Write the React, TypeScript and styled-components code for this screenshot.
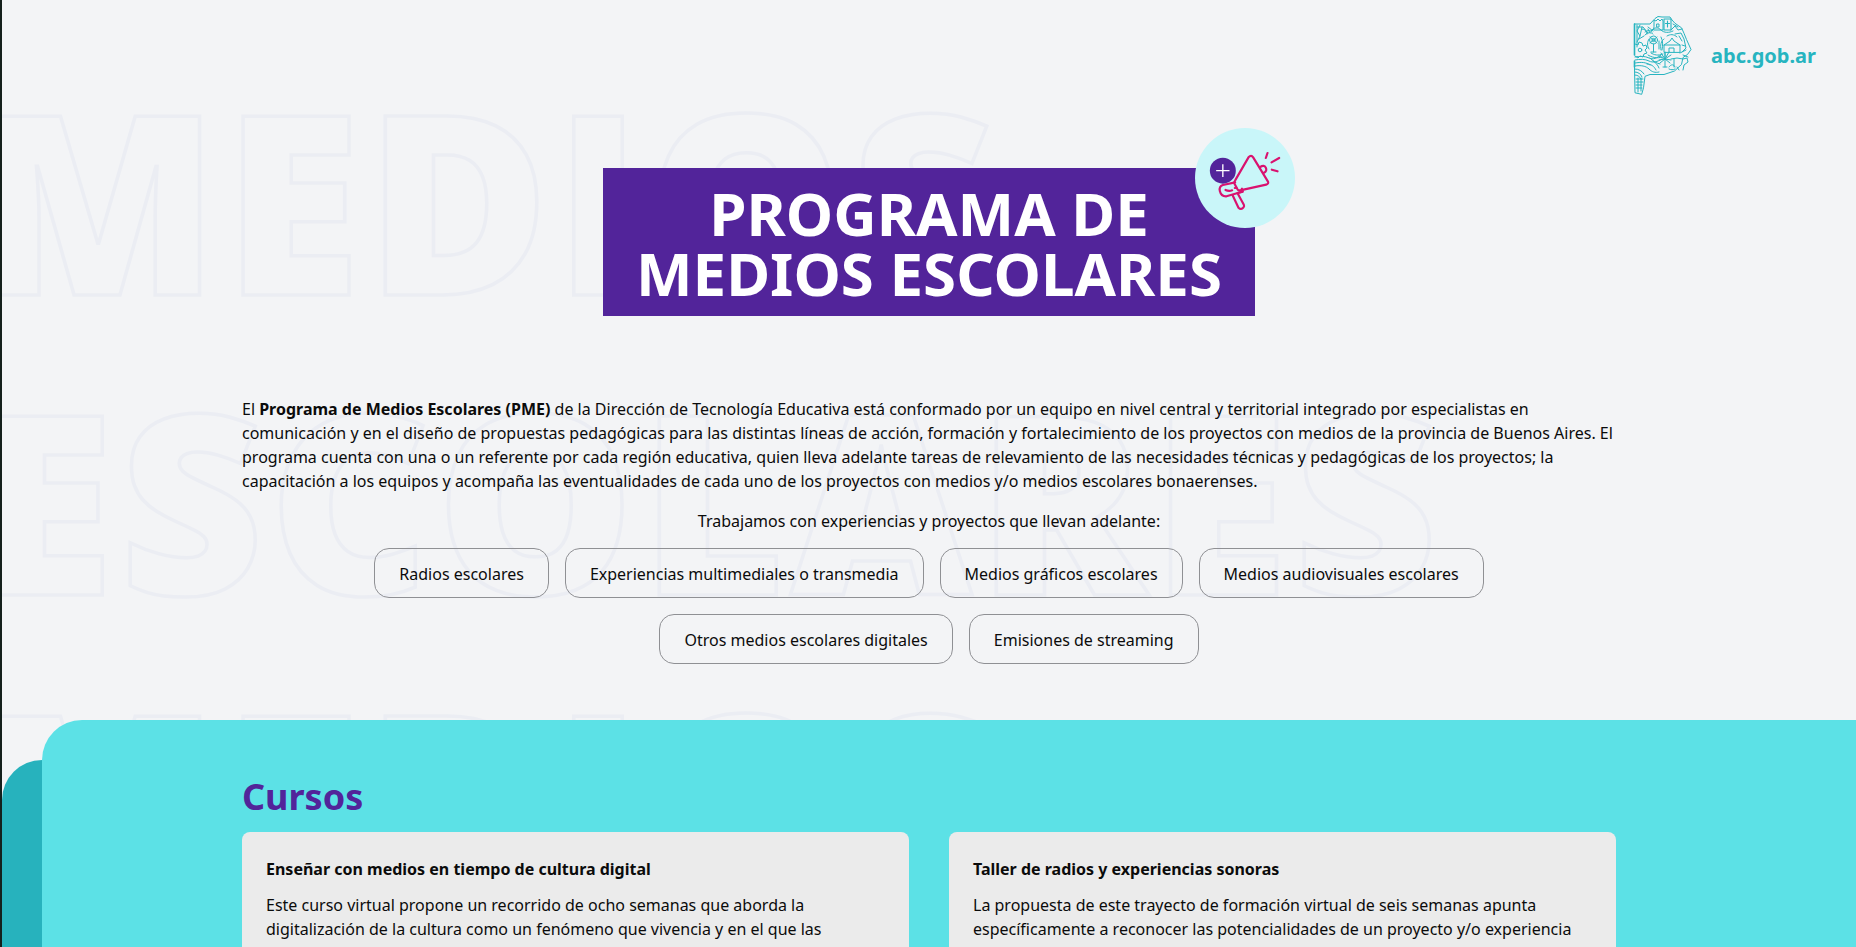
import React from "react";
import styled, { createGlobalStyle } from "styled-components";

const Global = createGlobalStyle`
  html, body { margin: 0; padding: 0; height: 100%; overflow: hidden; }
  body { background: #f3f4f6; font-family: "Noto Sans", "Open Sans", sans-serif; color: #0b0b0b; }
  * { box-sizing: border-box; }
`;

const Page = styled.div`
  position: relative;
  height: 947px;
  overflow: hidden;
  isolation: isolate;
`;

const EdgeLine = styled.div`
  position: absolute;
  left: 0;
  top: 0;
  bottom: 0;
  width: 2px;
  background: #14201c;
  z-index: 5;
`;

const Watermark = styled.div`
  position: absolute;
  left: -23px;
  top: 48px;
  z-index: -1;
  font-family: "Open Sans", sans-serif;
  font-size: 250px;
  line-height: 300px;
  font-weight: 800;
  letter-spacing: 5px;
  white-space: nowrap;
  color: transparent;
  -webkit-text-stroke: 3.5px #ebedf3;
  pointer-events: none;
`;

const Header = styled.header`
  display: flex;
  justify-content: flex-end;
  align-items: center;
  gap: 18px;
  height: 96px;
  padding: 15px 40px 0 0;
`;

const LogoText = styled.span`
  font-size: 20px;
  font-weight: 700;
  color: #27b4c0;
  margin-top: -1px;
`;

const TitleRow = styled.div`
  display: flex;
  justify-content: center;
  margin-top: 72px;
  padding-left: 2px;
`;

const TitleBox = styled.h1`
  position: relative;
  width: 652px;
  height: 148px;
  margin: 0;
  padding: 15px 0;
  background: #52249a;
  color: #fff;
  font-size: 60px;
  line-height: 60px;
  font-weight: 700;
  text-align: center;
`;

const Badge = styled.span`
  position: absolute;
  right: -40px;
  top: -40px;
  width: 100px;
  height: 100px;
  border-radius: 50%;
  background: #c9f6f9;
  display: flex;
`;

const Intro = styled.section`
  width: 1374px;
  margin: 81px 0 0 242px;
  font-size: 16px;
  line-height: 24px;
`;

const Paragraph = styled.p`
  margin: 0;
`;

const Lead = styled.p`
  margin: 16px 0 0;
  text-align: center;
`;

const Chips = styled.div`
  display: flex;
  flex-wrap: wrap;
  justify-content: center;
  gap: 16px;
  margin-top: 15px;
`;

const Chip = styled.div`
  height: 50px;
  padding: 2px 24px 0;
  display: flex;
  align-items: center;
  border: 1px solid #8f9094;
  border-radius: 15px;
  font-size: 16px;
`;

const Courses = styled.section`
  position: absolute;
  left: 42px;
  right: 0;
  top: 720px;
  bottom: 0;
  padding: 50px 240px 0 200px;
  background: #5ce1e6;
  border-top-left-radius: 40px;

  &::before {
    content: "";
    position: absolute;
    left: -40px;
    top: 40px;
    bottom: 0;
    width: 80px;
    background: #27b2bd;
    border-top-left-radius: 40px;
    z-index: -1;
  }
`;

const CoursesTitle = styled.h2`
  margin: 0;
  height: 62px;
  font-size: 36px;
  line-height: 54px;
  font-weight: 700;
  color: #52249a;
`;

const Cards = styled.div`
  display: grid;
  grid-template-columns: 1fr 1fr;
  gap: 40px;
`;

const Card = styled.article`
  height: 300px;
  padding: 25px 24px;
  background: #ebebeb;
  border-radius: 8px;
`;

const CardTitle = styled.h3`
  margin: 0 0 12px;
  font-size: 16px;
  line-height: 24px;
  font-weight: 700;
`;

const CardText = styled.p`
  margin: 0;
  font-size: 16px;
  line-height: 24px;
`;

const ProvinceLogo = () => (
  <svg width="60" height="82" viewBox="0 0 60 82" fill="none" stroke="#27b4c0" strokeWidth="1" strokeLinejoin="round" strokeLinecap="round">
    <path d="M1.5 9H17l5-5.5 3-2 4 .5h8l2 3 3 3.3 6.5 4.5 2.5 5.5 2.5 6.2 4.5 10-3.5 5-4.5 3-1.5 7-7 6.5-10.5 3.5H17l-5 1.8-1.5 11.5-1.8 6.5-6.7-1.5L1.5 52" />
    <path d="M1.5 9v31M1.5 46v6" strokeWidth="1.6" />
    <path d="M4 10v22M7 10l-3 6 3 5-3 6M4 12h6l5 6M9 12l-2 9M6 24l5-3" />
    <path d="M21 11V5l2 1 2-2 2 2 2-2 1 2v9h-9zM24 9h2v3h-2z" />
    <path d="M31 4h7v11h-7zM34.5 6v6M32.5 8.5h4" strokeWidth="1.1" />
    <path d="M38 15l4-4 3 4 4-1M18 16c3-4 7-4 10-1s8 3 12 1M40 9l5 3M15 12l5 4" />
    <path d="M12 20c3-3 6-3 8-1M9 14c3 0 5 2 5 5M12 17c3-2 5-2 7 0M15 14l2 4" />
    <circle cx="20.5" cy="25" r="4" />
    <circle cx="20.5" cy="25" r="1.6" />
    <path d="M17 22l7 6M24 22l-7 6M20.5 29v8M18 37h5M16 24c-2 3-2 7 0 10M26 26v8M28 22c2 4 2 8 1 13" />
    <path d="M31 37v-7l6-4 2-3 2 3 6 4v7zM36 37v-4h5v4M31 30h16M28 35c-1-5 0-9 3-11M34 21c3-2 7-2 10 1" />
    <path d="M42 19l6-1 3 6 2 9-4 4M47 38l6-3M46 21l3 5M49 30l3 1" />
    <path d="M2 29l3 1 1-3 3 1 1 3 3-1 1 3-2 2 2 3-3 1-1 3-3-1-2 2-3-2" />
    <circle cx="7" cy="35" r="1.8" />
    <path d="M2 42c5-1 10-1 14 1s8 0 12-3M2 45c5-1 10-1 14 1s8 1 13-2M2 48c6-1 11-1 15 2M2 51c6-1 11 0 14 3s6 4 10 3M18 38c3 2 7 3 12 1M15 40c3 2 9 4 14 2" />
    <path d="M17 43c3 3 6 5 10 6M14 49c4 0 7 2 9 6M20 46c3 2 5 4 6 7" />
    <path d="M32 38v14M32 44l-6-3M32 44l6-4M32 44l-5 4M32 44l5 4M32 44v-7M30 52h4M28 38l4 6 4-7M26 45l6-1 6 1" />
    <path d="M38 44l6-1 6 1 4-1 1 4-4 3-1 5M41 44v8M44 52l2 3M36 52c2-3 5-3 6 0M36 54c2 1 4 1 6 0M50 40l5 2" />
    <path d="M2 54c4 0 7 2 9 5M2 57c3 0 6 2 7 5M2 60c3 0 5 2 6 4M3 64h7M3 67h7M3 70h6M3 73h6M5 63v14M8 63v13" />
  </svg>
);

const Megaphone = () => (
  <svg width="100" height="100" viewBox="46 55 297 300" fill="none" stroke="#d9126f" strokeWidth="6.5" strokeLinecap="round" strokeLinejoin="round">
    <path d="M165 212L205 143q8-9 14 0L263 215q4 7-5 10L180 242q-5 1-8-3L163 222q-2-5 2-10z" />
    <path d="M240 172q12-8 17 2t-7 16" />
    <path d="M165 218L128 226q-12 4-9 18 4 17 20 16L186 246" />
    <path d="M136 241q10 5 20 1M164 235h2" />
    <path d="M158 258l17 36q8 8 15-1 3-4 1-8l-18-33" />
    <path d="M172 250l16-4-3-9" />
    <path d="M262 130l-5 15M297 145l-23 13M292 185l-17-5" />
    <circle cx="128" cy="183" r="39" fill="#52249a" stroke="none" />
    <path d="M128 164v38M108 183h40" stroke="#fff" strokeWidth="4" strokeLinecap="butt" />
  </svg>
);

const chips = [
  "Radios escolares",
  "Experiencias multimediales o transmedia",
  "Medios gráficos escolares",
  "Medios audiovisuales escolares",
  "Otros medios escolares digitales",
  "Emisiones de streaming",
];

export default function App() {
  return (
    <Page>
      <Global />
      <EdgeLine />
      <Watermark aria-hidden="true">
        MEDIOS
        <br />
        ESCOLARES
        <br />
        MEDIOS
      </Watermark>
      <Header>
        <ProvinceLogo />
        <LogoText>abc.gob.ar</LogoText>
      </Header>
      <TitleRow>
        <TitleBox>
          PROGRAMA DE
          <br />
          MEDIOS ESCOLARES
          <Badge>
            <Megaphone />
          </Badge>
        </TitleBox>
      </TitleRow>
      <Intro>
        <Paragraph>
          El <strong>Programa de Medios Escolares (PME)</strong> de la Dirección de Tecnología Educativa está
          conformado por un equipo en nivel central y territorial integrado por especialistas en comunicación y en el
          diseño de propuestas pedagógicas para las distintas líneas de acción, formación y fortalecimiento de los
          proyectos con medios de la provincia de Buenos Aires. El programa cuenta con una o un referente por cada
          región educativa, quien lleva adelante tareas de relevamiento de las necesidades técnicas y pedagógicas de
          los proyectos; la capacitación a los equipos y acompaña las eventualidades de cada uno de los proyectos con
          medios y/o medios escolares bonaerenses.
        </Paragraph>
        <Lead>Trabajamos con experiencias y proyectos que llevan adelante:</Lead>
        <Chips>
          {chips.map((c) => (
            <Chip key={c}>{c}</Chip>
          ))}
        </Chips>
      </Intro>
      <Courses>
        <CoursesTitle>Cursos</CoursesTitle>
        <Cards>
          <Card>
            <CardTitle>Enseñar con medios en tiempo de cultura digital</CardTitle>
            <CardText>
              Este curso virtual propone un recorrido de ocho semanas que aborda la digitalización de la cultura como
              un fenómeno que vivencia y en el que las
            </CardText>
          </Card>
          <Card>
            <CardTitle>Taller de radios y experiencias sonoras</CardTitle>
            <CardText>
              La propuesta de este trayecto de formación virtual de seis semanas apunta específicamente a reconocer las
              potencialidades de un proyecto y/o experiencia
            </CardText>
          </Card>
        </Cards>
      </Courses>
    </Page>
  );
}
